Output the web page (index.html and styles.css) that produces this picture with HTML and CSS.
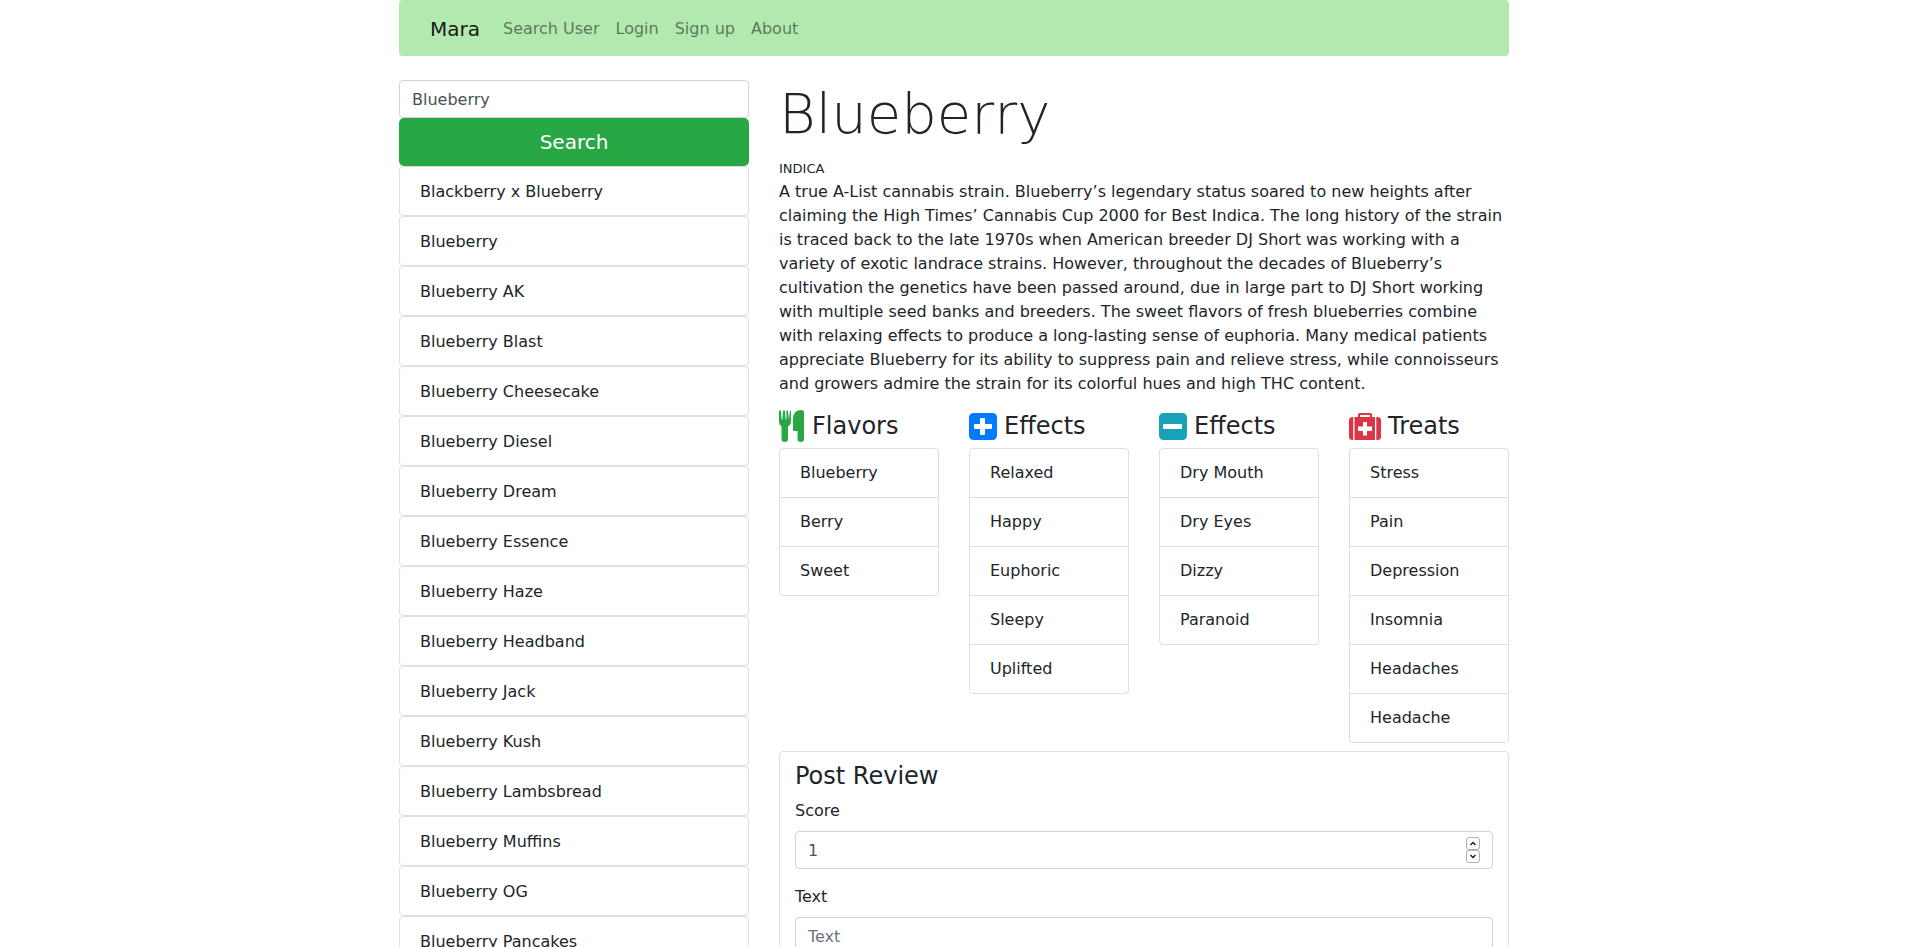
FILE: index.html
```html
<!DOCTYPE html>
<html lang="en">
<head>
<meta charset="utf-8">
<title>Mara - Blueberry</title>
<link rel="stylesheet" href="styles.css">
</head>
<body>
<div class="container">
  <nav class="navbar">
    <a class="brand" href="#">Mara</a>
    <a class="nav-link" href="#">Search User</a>
    <a class="nav-link" href="#">Login</a>
    <a class="nav-link" href="#">Sign up</a>
    <a class="nav-link" href="#">About</a>
  </nav>
  <div class="columns">
    <aside class="sidebar">
      <form class="search">
        <input class="field" type="text" value="Blueberry" aria-label="Strain name">
        <button class="search-button" type="button">Search</button>
      </form>
      <a class="result" href="#">Blackberry x Blueberry</a>
      <a class="result" href="#">Blueberry</a>
      <a class="result" href="#">Blueberry AK</a>
      <a class="result" href="#">Blueberry Blast</a>
      <a class="result" href="#">Blueberry Cheesecake</a>
      <a class="result" href="#">Blueberry Diesel</a>
      <a class="result" href="#">Blueberry Dream</a>
      <a class="result" href="#">Blueberry Essence</a>
      <a class="result" href="#">Blueberry Haze</a>
      <a class="result" href="#">Blueberry Headband</a>
      <a class="result" href="#">Blueberry Jack</a>
      <a class="result" href="#">Blueberry Kush</a>
      <a class="result" href="#">Blueberry Lambsbread</a>
      <a class="result" href="#">Blueberry Muffins</a>
      <a class="result" href="#">Blueberry OG</a>
      <a class="result" href="#">Blueberry Pancakes</a>
    </aside>
    <main>
      <h1 class="title">Blueberry</h1>
      <div class="race">INDICA</div>
      <p class="description">A true A-List cannabis strain. Blueberry’s legendary status soared to new heights after claiming the High Times’ Cannabis Cup 2000 for Best Indica. The long history of the strain is traced back to the late 1970s when American breeder DJ Short was working with a variety of exotic landrace strains. However, throughout the decades of Blueberry’s cultivation the genetics have been passed around, due in large part to DJ Short working with multiple seed banks and breeders. The sweet flavors of fresh blueberries combine with relaxing effects to produce a long-lasting sense of euphoria. Many medical patients appreciate Blueberry for its ability to suppress pain and relieve stress, while connoisseurs and growers admire the strain for its colorful hues and high THC content.</p>
      <div class="traits">
        <section>
          <h2 class="trait-title"><svg class="icon flavor" width="26" height="32" viewBox="0 0 26 32" aria-hidden="true"><path d="M0 1Q1-.5 2 1L2.700 9.500H3.500L4 1Q5-.5 6 1L6.500 9.500H7.300L7.500 1Q8.200-.5 9 1L10 9.500Q11 0 11 1Q12-.5 12 2V11Q12 15 9 16.500V29Q9 32 5.700 32Q2.500 32 2.500 29V16.500Q0 15 0 11ZM22.500 0Q25 0 25 2V29Q25 32 21.800 32Q18.500 32 18.500 29V21H15Q14 21 14 20V9Q14 0 22.500 0Z"/></svg>Flavors</h2>
          <ul class="list"><li>Blueberry</li><li>Berry</li><li>Sweet</li></ul>
        </section>
        <section>
          <h2 class="trait-title"><svg class="icon positive" width="28" height="32" viewBox="0 0 28 32" aria-hidden="true"><path fill-rule="evenodd" d="M5 3H23Q28 3 28 8V25Q28 30 23 30H5Q0 30 0 25V8Q0 3 5 3ZM12 8Q11 8 11 9V14H6Q5 14 5 15V18Q5 19 6 19H11V24Q11 25 12 25H15Q16 25 16 24V19H22Q23 19 23 18V15Q23 14 22 14H16V9Q16 8 15 8Z"/></svg>Effects</h2>
          <ul class="list"><li>Relaxed</li><li>Happy</li><li>Euphoric</li><li>Sleepy</li><li>Uplifted</li></ul>
        </section>
        <section>
          <h2 class="trait-title"><svg class="icon negative" width="28" height="32" viewBox="0 0 28 32" aria-hidden="true"><path fill-rule="evenodd" d="M5 3H23Q28 3 28 8V25Q28 30 23 30H5Q0 30 0 25V8Q0 3 5 3ZM5 14Q4 14 4 15V18Q4 19 5 19H22Q23 19 23 18V15Q23 14 22 14Z"/></svg>Effects</h2>
          <ul class="list"><li>Dry Mouth</li><li>Dry Eyes</li><li>Dizzy</li><li>Paranoid</li></ul>
        </section>
        <section>
          <h2 class="trait-title"><svg class="icon treat" width="32" height="32" viewBox="0 0 32 32" aria-hidden="true"><path fill-rule="evenodd" d="M3.500 7H4.200V30H3.500Q0 30 0 26.500V10.500Q0 7 3.500 7ZM28.500 7H27.300V30H28.500Q32 30 32 26.500V10.500Q32 7 28.500 7ZM5.500 7H9V4.500Q9 3 10.500 3H21.500Q23 3 23 4.500V7H26V30H5.500ZM11 7H21V5H11ZM14 12V16.500H9V21H14V25.500H18V21H23V16.500H18V12Z"/></svg>Treats</h2>
          <ul class="list"><li>Stress</li><li>Pain</li><li>Depression</li><li>Insomnia</li><li>Headaches</li><li>Headache</li></ul>
        </section>
      </div>
      <form class="review">
        <h2 class="review-title">Post Review</h2>
        <label class="label" for="score">Score</label>
        <div class="number">
          <input class="field" id="score" type="number" value="1">
          <div class="stepper">
            <button class="step" type="button" aria-label="Increase score"><svg width="8" height="5" viewBox="0 0 8 5"><path d="M1.500 4 4 1.500 6.500 4"/></svg></button>
            <button class="step" type="button" aria-label="Decrease score"><svg width="8" height="5" viewBox="0 0 8 5"><path d="M1.500 1 4 3.500 6.500 1"/></svg></button>
          </div>
        </div>
        <label class="label" for="text">Text</label>
        <input class="field" id="text" type="text" placeholder="Text">
      </form>
    </main>
  </div>
</div>
</body>
</html>
```

FILE: styles.css
```css
* { box-sizing: border-box; }
body {
  margin: 0;
  padding-right: 12px;
  background: #fff;
  color: #212529;
  font: 16px/24px "DejaVu Sans", sans-serif;
}
a { color: inherit; text-decoration: none; }
.container { max-width: 1110px; margin: 0 auto; }
.navbar {
  display: flex;
  align-items: center;
  gap: 16px;
  padding: 17px 31px 15px;
  border-radius: 4px;
  background: #b2e9ae;
}
.brand { margin-right: 7px; font-size: 20px; color: rgba(0, 0, 0, .9); }
.nav-link { color: rgba(0, 0, 0, .5); }
.columns {
  display: grid;
  grid-template-columns: 350px minmax(0, 1fr);
  gap: 30px;
  margin-top: 24px;
  align-items: start;
}
.search { display: grid; }
.field {
  display: block;
  width: 100%;
  height: 38px;
  padding: 6px 12px;
  border: 1px solid #ced4da;
  border-radius: 4px;
  background: #fff;
  color: #495057;
  font: inherit;
}
.field::placeholder { color: #6c757d; opacity: 1; }
.search-button {
  height: 48px;
  border: 0;
  border-radius: 5px;
  background: #28a745;
  color: #fff;
  font: 20px/30px "DejaVu Sans", sans-serif;
}
.result {
  display: block;
  padding: 13px 20px 11px;
  border: 1px solid #dfdfdf;
  border-radius: 4px;
}
.title {
  margin: 0 0 8px;
  font: 200 56px/67px "DejaVu Sans", sans-serif;
}
.race { padding-top: 2px; font-size: 13px; line-height: 23px; }
.description { margin: 0 0 14px; }
.traits {
  display: grid;
  grid-template-columns: repeat(4, minmax(0, 1fr));
  gap: 30px;
  align-items: start;
}
.trait-title {
  display: flex;
  align-items: center;
  gap: 7px;
  margin: 0 0 6px;
  font-size: 24px;
  font-weight: 400;
  line-height: 29px;
}
.icon { flex: none; fill: currentColor; }
.flavor { color: #28a745; }
.positive { color: #007bff; }
.negative { color: #17a2b8; }
.treat { color: #dc3545; }
.list {
  margin: 0;
  padding: 0;
  border: 1px solid #dfdfdf;
  border-radius: 4px;
  list-style: none;
}
.list li { padding: 12px 20px; }
.list li + li { border-top: 1px solid #dfdfdf; }
.review {
  margin-top: 8px;
  padding: 10px 15px;
  border: 1px solid #dfdfdf;
  border-radius: 4px;
}
.review-title {
  margin: 0 0 8px;
  font-size: 24px;
  font-weight: 400;
  line-height: 29px;
}
.label { display: block; margin-bottom: 8px; }
.number { position: relative; margin-bottom: 16px; }
.number .field { appearance: textfield; }
.number .field::-webkit-inner-spin-button { appearance: none; margin: 0; }
.stepper {
  position: absolute;
  top: 6px;
  right: 13px;
  display: grid;
}
.step {
  display: grid;
  place-items: center;
  width: 14px;
  height: 13px;
  padding: 0;
  border: 1px solid #b0b0b0;
  border-radius: 3px;
  background: #fff;
}
.step path { fill: none; stroke: #222; stroke-width: 1.5; }
```
